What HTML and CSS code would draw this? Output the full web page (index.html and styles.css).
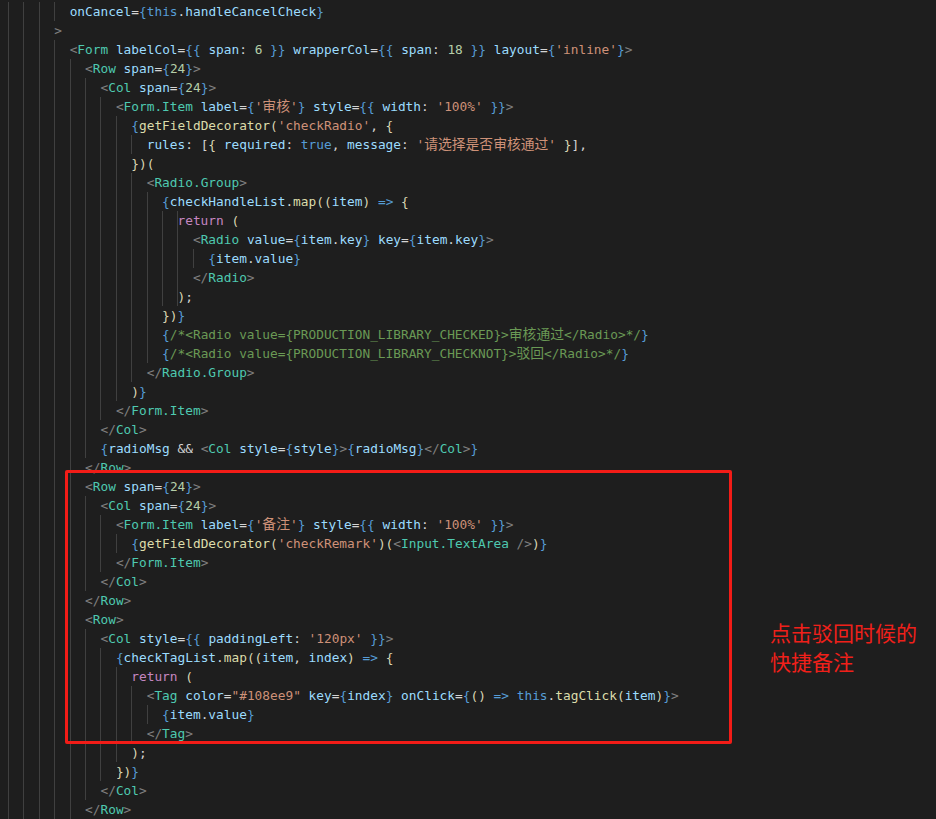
FILE: index.html
```html
<!DOCTYPE html>
<html lang="zh">
<head>
    <meta charset="UTF-8">
    <title>CheckModal.jsx</title>
    <link rel="stylesheet" href="styles.css">
</head>
<body>
    <div class="editor">
        <!-- código -->
        <div class="code">
<div class="line"><span class="ind">        </span><span class="a">onCancel</span>=<span class="b">{</span><span class="k">this</span>.<span class="v">handleCancelCheck</span><span class="b">}</span></div>
<div class="line"><span class="ind">      </span><span class="t">&gt;</span></div>
<div class="line"><span class="ind">        </span><span class="t">&lt;</span><span class="tg">Form</span> <span class="a">labelCol</span>=<span class="b">{{</span> <span class="v">span</span>: <span class="n">6</span> <span class="b">}}</span> <span class="a">wrapperCol</span>=<span class="b">{{</span> <span class="v">span</span>: <span class="n">18</span> <span class="b">}}</span> <span class="a">layout</span>=<span class="b">{</span><span class="s">'inline'</span><span class="b">}</span><span class="t">&gt;</span></div>
<div class="line"><span class="ind">          </span><span class="t">&lt;</span><span class="tg">Row</span> <span class="a">span</span>=<span class="b">{</span><span class="n">24</span><span class="b">}</span><span class="t">&gt;</span></div>
<div class="line"><span class="ind">            </span><span class="t">&lt;</span><span class="tg">Col</span> <span class="a">span</span>=<span class="b">{</span><span class="n">24</span><span class="b">}</span><span class="t">&gt;</span></div>
<div class="line"><span class="ind">              </span><span class="t">&lt;</span><span class="tg">Form.Item</span> <span class="a">label</span>=<span class="b">{</span><span class="s">'<span class="cjk">审核</span>'</span><span class="b">}</span> <span class="a">style</span>=<span class="b">{{</span> <span class="v">width</span>: <span class="s">'100%'</span> <span class="b">}}</span><span class="t">&gt;</span></div>
<div class="line"><span class="ind">                </span><span class="b">{</span><span class="f">getFieldDecorator</span><span class="y">(</span><span class="s">'checkRadio'</span>, <span class="y">{</span></div>
<div class="line"><span class="ind">                  </span><span class="v">rules</span>: [<span class="y">{</span> <span class="v">required</span>: <span class="k">true</span>, <span class="v">message</span>: <span class="s">'<span class="cjk">请选择是否审核通过</span>'</span> <span class="y">}</span>],</div>
<div class="line"><span class="ind">                </span><span class="y">})(</span></div>
<div class="line"><span class="ind">                  </span><span class="t">&lt;</span><span class="tg">Radio.Group</span><span class="t">&gt;</span></div>
<div class="line"><span class="ind">                    </span><span class="b">{</span><span class="v">checkHandleList</span>.<span class="f">map</span><span class="y">((</span><span class="v">item</span><span class="y">)</span> <span class="k">=&gt;</span> <span class="y">{</span></div>
<div class="line"><span class="ind">                      </span><span class="c">return</span> <span class="y">(</span></div>
<div class="line"><span class="ind">                        </span><span class="t">&lt;</span><span class="tg">Radio</span> <span class="a">value</span>=<span class="b">{</span><span class="v">item</span>.<span class="v">key</span><span class="b">}</span> <span class="a">key</span>=<span class="b">{</span><span class="v">item</span>.<span class="v">key</span><span class="b">}</span><span class="t">&gt;</span></div>
<div class="line"><span class="ind">                          </span><span class="b">{</span><span class="v">item</span>.<span class="v">value</span><span class="b">}</span></div>
<div class="line"><span class="ind">                        </span><span class="t">&lt;/</span><span class="tg">Radio</span><span class="t">&gt;</span></div>
<div class="line"><span class="ind">                      </span><span class="y">)</span>;</div>
<div class="line"><span class="ind">                    </span><span class="y">})</span><span class="b">}</span></div>
<div class="line"><span class="ind">                    </span><span class="b">{</span><span class="cm">/*&lt;Radio value={PRODUCTION_LIBRARY_CHECKED}&gt;<span class="cjk">审核通过</span>&lt;/Radio&gt;*/</span><span class="b">}</span></div>
<div class="line"><span class="ind">                    </span><span class="b">{</span><span class="cm">/*&lt;Radio value={PRODUCTION_LIBRARY_CHECKNOT}&gt;<span class="cjk">驳回</span>&lt;/Radio&gt;*/</span><span class="b">}</span></div>
<div class="line"><span class="ind">                  </span><span class="t">&lt;/</span><span class="tg">Radio.Group</span><span class="t">&gt;</span></div>
<div class="line"><span class="ind">                </span><span class="y">)</span><span class="b">}</span></div>
<div class="line"><span class="ind">              </span><span class="t">&lt;/</span><span class="tg">Form.Item</span><span class="t">&gt;</span></div>
<div class="line"><span class="ind">            </span><span class="t">&lt;/</span><span class="tg">Col</span><span class="t">&gt;</span></div>
<div class="line"><span class="ind">            </span><span class="b">{</span><span class="v">radioMsg</span> &amp;&amp; <span class="t">&lt;</span><span class="tg">Col</span> <span class="a">style</span>=<span class="b">{</span><span class="v">style</span><span class="b">}</span><span class="t">&gt;</span><span class="b">{</span><span class="v">radioMsg</span><span class="b">}</span><span class="t">&lt;/</span><span class="tg">Col</span><span class="t">&gt;</span><span class="b">}</span></div>
<div class="line"><span class="ind">          </span><span class="t">&lt;/</span><span class="tg">Row</span><span class="t">&gt;</span></div>
<div class="line"><span class="ind">          </span><span class="t">&lt;</span><span class="tg">Row</span> <span class="a">span</span>=<span class="b">{</span><span class="n">24</span><span class="b">}</span><span class="t">&gt;</span></div>
<div class="line"><span class="ind">            </span><span class="t">&lt;</span><span class="tg">Col</span> <span class="a">span</span>=<span class="b">{</span><span class="n">24</span><span class="b">}</span><span class="t">&gt;</span></div>
<div class="line"><span class="ind">              </span><span class="t">&lt;</span><span class="tg">Form.Item</span> <span class="a">label</span>=<span class="b">{</span><span class="s">'<span class="cjk">备注</span>'</span><span class="b">}</span> <span class="a">style</span>=<span class="b">{{</span> <span class="v">width</span>: <span class="s">'100%'</span> <span class="b">}}</span><span class="t">&gt;</span></div>
<div class="line"><span class="ind">                </span><span class="b">{</span><span class="f">getFieldDecorator</span><span class="y">(</span><span class="s">'checkRemark'</span><span class="y">)(</span><span class="t">&lt;</span><span class="tg">Input.TextArea</span> <span class="t">/&gt;</span><span class="y">)</span><span class="b">}</span></div>
<div class="line"><span class="ind">              </span><span class="t">&lt;/</span><span class="tg">Form.Item</span><span class="t">&gt;</span></div>
<div class="line"><span class="ind">            </span><span class="t">&lt;/</span><span class="tg">Col</span><span class="t">&gt;</span></div>
<div class="line"><span class="ind">          </span><span class="t">&lt;/</span><span class="tg">Row</span><span class="t">&gt;</span></div>
<div class="line"><span class="ind">          </span><span class="t">&lt;</span><span class="tg">Row</span><span class="t">&gt;</span></div>
<div class="line"><span class="ind">            </span><span class="t">&lt;</span><span class="tg">Col</span> <span class="a">style</span>=<span class="b">{{</span> <span class="v">paddingLeft</span>: <span class="s">'120px'</span> <span class="b">}}</span><span class="t">&gt;</span></div>
<div class="line"><span class="ind">              </span><span class="b">{</span><span class="v">checkTagList</span>.<span class="f">map</span><span class="y">((</span><span class="v">item</span>, <span class="v">index</span><span class="y">)</span> <span class="k">=&gt;</span> <span class="y">{</span></div>
<div class="line"><span class="ind">                </span><span class="c">return</span> <span class="y">(</span></div>
<div class="line"><span class="ind">                  </span><span class="t">&lt;</span><span class="tg">Tag</span> <span class="a">color</span>=<span class="s">"#108ee9"</span> <span class="a">key</span>=<span class="b">{</span><span class="v">index</span><span class="b">}</span> <span class="a">onClick</span>=<span class="b">{</span><span class="y">()</span> <span class="k">=&gt;</span> <span class="k">this</span>.<span class="f">tagClick</span><span class="y">(</span><span class="v">item</span><span class="y">)</span><span class="b">}</span><span class="t">&gt;</span></div>
<div class="line"><span class="ind">                    </span><span class="b">{</span><span class="v">item</span>.<span class="v">value</span><span class="b">}</span></div>
<div class="line"><span class="ind">                  </span><span class="t">&lt;/</span><span class="tg">Tag</span><span class="t">&gt;</span></div>
<div class="line"><span class="ind">                </span><span class="y">)</span>;</div>
<div class="line"><span class="ind">              </span><span class="y">})</span><span class="b">}</span></div>
<div class="line"><span class="ind">            </span><span class="t">&lt;/</span><span class="tg">Col</span><span class="t">&gt;</span></div>
<div class="line"><span class="ind">          </span><span class="t">&lt;/</span><span class="tg">Row</span><span class="t">&gt;</span></div>
        </div>

        <!-- anotación -->
        <div class="mark"></div>
        <div class="note">点击驳回时候的<br>快捷备注</div>
    </div>
</body>
</html>
```

FILE: styles.css
```css
/* Estilos generales */
* {
    margin: 0;
    padding: 0;
    box-sizing: border-box;
}

body {
    background-color: #1e1e1e;
}

.editor {
    position: relative;
    width: 936px;
    height: 819px;
    overflow: hidden;
    background-color: #1e1e1e;
}

/* Código */
.code {
    padding: 2px 0 0 8px;
    font-family: 'DejaVu Sans Mono', monospace;
    font-size: 12.8px;
    color: #d4d4d4;
}

.line {
    height: 19px;
    line-height: 19px;
    white-space: pre;
}

/* guías de indentación */
.ind {
    display: inline-block;
    height: 19px;
    vertical-align: top;
    background: repeating-linear-gradient(to right, #404040 0, #404040 1px, transparent 1px, transparent 15.4px);
}

.cjk {
    font-family: 'Noto Sans CJK SC', sans-serif;
    font-size: 13.8px;
    line-height: 1;
}

.t  { color: #808080; }
.tg { color: #4ec9b0; }
.a  { color: #9cdcfe; }
.v  { color: #9cdcfe; }
.b  { color: #569cd6; }
.k  { color: #569cd6; }
.s  { color: #ce9178; }
.n  { color: #b5cea8; }
.f  { color: #dcdcaa; }
.c  { color: #c586c0; }
.y  { color: #dad6b4; }
.cm { color: #6a9955; }

/* Recuadro rojo */
.mark {
    position: absolute;
    left: 65px;
    top: 470px;
    width: 667px;
    height: 274px;
    border: 3px solid #f21c17;
    border-radius: 2px;
}

.note {
    position: absolute;
    left: 770px;
    top: 618px;
    font-family: 'Noto Sans CJK SC', sans-serif;
    font-size: 21px;
    line-height: 29px;
    color: #f0201a;
}
```
